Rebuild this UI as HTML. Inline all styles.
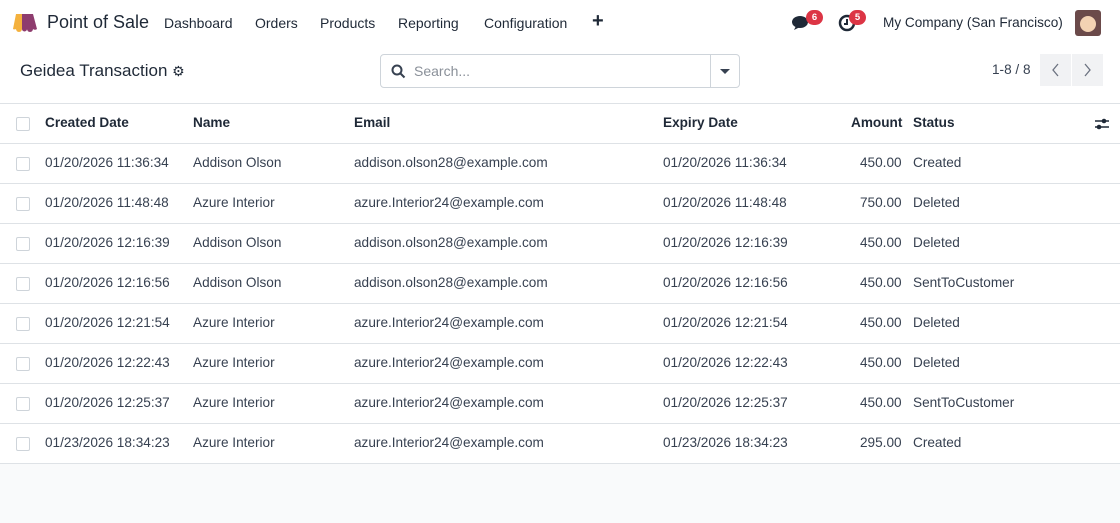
<!DOCTYPE html><html><head><style>
*{box-sizing:border-box;margin:0;padding:0}
body{width:1120px;height:523px;font-family:"Liberation Sans",sans-serif;color:#374151;background:#f9fafb;font-size:14px;overflow:hidden;position:relative}
.nav{position:absolute;top:0;left:0;width:1120px;height:46px;background:#fff}
.nav span{position:absolute;top:15px;font-size:14px;color:#1f2937;white-space:nowrap}
.ctrl{position:absolute;top:46px;left:0;width:1120px;height:58px;background:#fff;border-bottom:1px solid #dee2e6}
.row{position:absolute;left:0;width:1120px;height:40px;background:#fff;border-bottom:1px solid #dee2e6}
.row span{position:absolute;top:11px;font-size:13.6px;color:#374151;white-space:nowrap}
.cb{position:absolute;left:16px;top:13px;width:14px;height:14px;border:1px solid #ced4da;border-radius:2px;background:#fff}
.hd span{font-weight:bold;color:#1f2937}
.badge{position:absolute;width:17px;height:15px;border-radius:8px;background:#dc3545;color:#fff;font-size:9.5px;font-weight:bold;text-align:center;line-height:15px}
</style></head><body>
<div class="nav">
<svg style="position:absolute;left:12px;top:12px" width="28" height="21" viewBox="0 0 28 21"><path d="M4 2h6v15a3 3 0 0 1-6 0z" fill="#f4b13d"/><path d="M4 2L1 17a3 3 0 0 0 3 0z" fill="#f4b13d"/><path d="M10 2h5v15a2.5 2.5 0 0 1-5 0z" fill="#8e3c6e"/><path d="M15 2h6v15a3 3 0 0 1-6 0z" fill="#8e3c6e"/><path d="M21 2l4 15a3 3 0 0 1-4 0z" fill="#8e3c6e"/></svg>
<span style="left:47px;top:12px;font-size:18px">Point of Sale</span>
<span style="left:164px">Dashboard</span><span style="left:255px">Orders</span><span style="left:320px">Products</span><span style="left:398px">Reporting</span><span style="left:484px">Configuration</span>
<span style="left:592px;top:10px;font-size:20px;font-weight:bold">+</span>
<svg style="position:absolute;left:792px;top:15px" width="20" height="16" viewBox="0 0 20 16"><ellipse cx="8" cy="7" rx="8" ry="6" fill="#1f2937"/><path d="M4 11l-2 4 6-3z" fill="#1f2937"/></svg>
<div class="badge" style="left:806px;top:10px">6</div>
<svg style="position:absolute;left:838px;top:14px" width="18" height="18" viewBox="0 0 18 18"><circle cx="9" cy="9" r="7" fill="none" stroke="#1f2937" stroke-width="2.5"/><path d="M9 5v5h-3" stroke="#1f2937" stroke-width="2" fill="none"/></svg>
<div class="badge" style="left:849px;top:10px">5</div>
<span style="left:883px;font-size:13.6px">My Company (San Francisco)</span>
<div style="position:absolute;left:1075px;top:10px;width:26px;height:26px;border-radius:3px;background:#6b4a4a"><div style="margin:6px 5px;width:16px;height:16px;border-radius:50%;background:#f3d2b3"></div></div>
</div>
<div class="ctrl">
<span style="position:absolute;left:20px;top:15px;font-size:17px;color:#1f2937">Geidea Transaction <span style="font-size:14px">⚙</span></span>
<div style="position:absolute;left:380px;top:8px;width:360px;height:34px;border:1px solid #ced4da;border-radius:4px;background:#fff">
<svg style="position:absolute;left:10px;top:9px" width="15" height="15" viewBox="0 0 15 15"><circle cx="6" cy="6" r="4.5" fill="none" stroke="#374151" stroke-width="2"/><path d="M9.5 9.5l4 4" stroke="#374151" stroke-width="2"/></svg>
<span style="position:absolute;left:33px;top:8px;color:#8a9099">Search...</span>
<div style="position:absolute;left:329px;top:0;width:1px;height:32px;background:#ced4da"></div>
<div style="position:absolute;left:339px;top:14px;border:5px solid transparent;border-top-color:#374151"></div>
</div>
<span style="position:absolute;left:992px;top:16px;color:#374151;font-size:13.6px">1-8 / 8</span>
<svg style="position:absolute;left:1040px;top:8px" width="31" height="32"><rect width="31" height="32" fill="#f1f2f4"/><path d="M18 10l-5 6 5 6" fill="none" stroke="#6b7280" stroke-width="1.3"/></svg>
<svg style="position:absolute;left:1072px;top:8px" width="31" height="32"><rect width="31" height="32" fill="#f1f2f4"/><path d="M13 10l5 6-5 6" fill="none" stroke="#6b7280" stroke-width="1.3"/></svg>
</div>
<div class="row hd" style="top:104px;background:#fff"><div class="cb"></div><span style="left:45px">Created Date</span><span style="left:193px">Name</span><span style="left:354px">Email</span><span style="left:663px">Expiry Date</span><span style="left:851px">Amount</span><span style="left:913px">Status</span>
<svg style="position:absolute;left:1094px;top:12px" width="16" height="16" viewBox="0 0 16 16"><path d="M1 5h14M1 11h14" stroke="#1f2937" stroke-width="1.6"/><circle cx="10" cy="5" r="2.3" fill="#1f2937"/><circle cx="5" cy="11" r="2.3" fill="#1f2937"/></svg></div>
<div class="row" style="top:144px"><div class="cb"></div><span style="left:45px">01/20/2026 11:36:34</span><span style="left:193px">Addison Olson</span><span style="left:354px">addison.olson28@example.com</span><span style="left:663px">01/20/2026 11:36:34</span><span style="left:860px">450.00</span><span style="left:913px">Created</span></div>
<div class="row" style="top:184px"><div class="cb"></div><span style="left:45px">01/20/2026 11:48:48</span><span style="left:193px">Azure Interior</span><span style="left:354px">azure.Interior24@example.com</span><span style="left:663px">01/20/2026 11:48:48</span><span style="left:860px">750.00</span><span style="left:913px">Deleted</span></div>
<div class="row" style="top:224px"><div class="cb"></div><span style="left:45px">01/20/2026 12:16:39</span><span style="left:193px">Addison Olson</span><span style="left:354px">addison.olson28@example.com</span><span style="left:663px">01/20/2026 12:16:39</span><span style="left:860px">450.00</span><span style="left:913px">Deleted</span></div>
<div class="row" style="top:264px"><div class="cb"></div><span style="left:45px">01/20/2026 12:16:56</span><span style="left:193px">Addison Olson</span><span style="left:354px">addison.olson28@example.com</span><span style="left:663px">01/20/2026 12:16:56</span><span style="left:860px">450.00</span><span style="left:913px">SentToCustomer</span></div>
<div class="row" style="top:304px"><div class="cb"></div><span style="left:45px">01/20/2026 12:21:54</span><span style="left:193px">Azure Interior</span><span style="left:354px">azure.Interior24@example.com</span><span style="left:663px">01/20/2026 12:21:54</span><span style="left:860px">450.00</span><span style="left:913px">Deleted</span></div>
<div class="row" style="top:344px"><div class="cb"></div><span style="left:45px">01/20/2026 12:22:43</span><span style="left:193px">Azure Interior</span><span style="left:354px">azure.Interior24@example.com</span><span style="left:663px">01/20/2026 12:22:43</span><span style="left:860px">450.00</span><span style="left:913px">Deleted</span></div>
<div class="row" style="top:384px"><div class="cb"></div><span style="left:45px">01/20/2026 12:25:37</span><span style="left:193px">Azure Interior</span><span style="left:354px">azure.Interior24@example.com</span><span style="left:663px">01/20/2026 12:25:37</span><span style="left:860px">450.00</span><span style="left:913px">SentToCustomer</span></div>
<div class="row" style="top:424px"><div class="cb"></div><span style="left:45px">01/23/2026 18:34:23</span><span style="left:193px">Azure Interior</span><span style="left:354px">azure.Interior24@example.com</span><span style="left:663px">01/23/2026 18:34:23</span><span style="left:860px">295.00</span><span style="left:913px">Created</span></div>
</body></html>
